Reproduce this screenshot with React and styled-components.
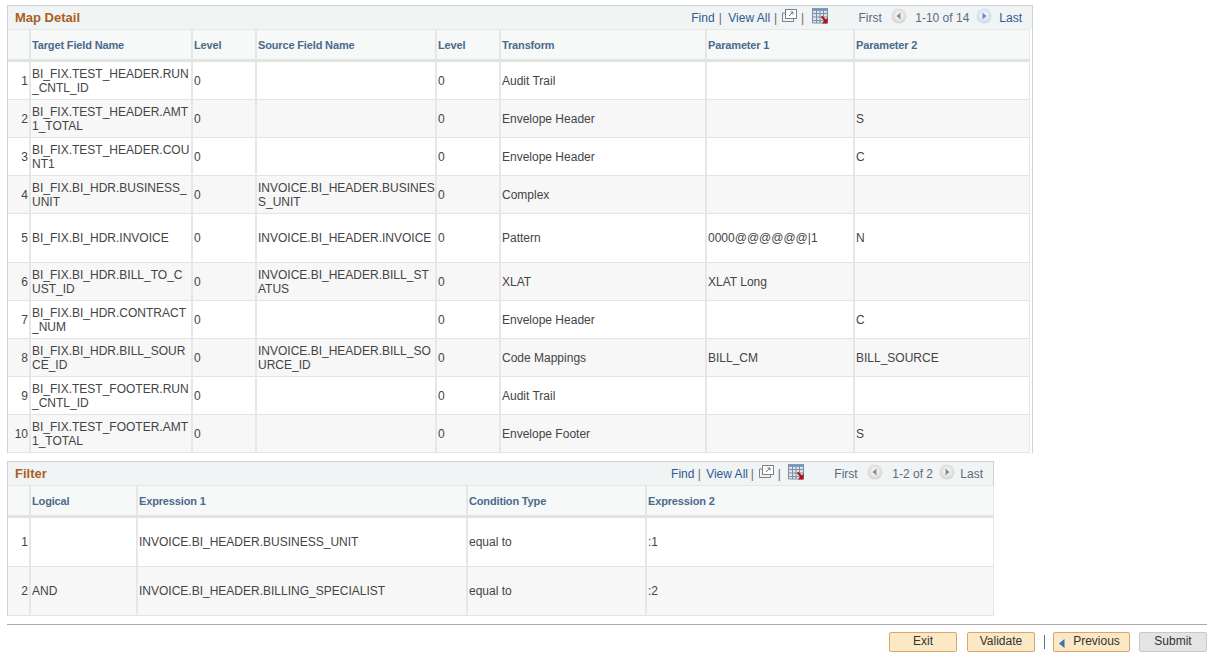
import styled, {createGlobalStyle} from 'styled-components'

const GlobalStyle = createGlobalStyle`
  html, body {
    margin: 0;
    padding: 0;
    background: #fff;
    font-family: "Liberation Sans", Arial, sans-serif;
    font-size: 12px;
    color: #3d3d3d;
  }
`;

const Page = styled.div`
  width: 1211px;
  height: 657px;
  overflow: hidden;
  box-sizing: border-box;
  padding: 5px 4px 0 7px;
`;

const Grid = styled.section`
  box-sizing: border-box;
  width: ${p => p.$width}px;
  margin-bottom: 8px;
  border: solid #cfd2d4;
  border-width: 1px 1px 0 1px;
`;

const TitleBar = styled.div`
  display: flex;
  align-items: center;
  justify-content: space-between;
  height: 23px;
  box-sizing: border-box;
  padding: 0 10px 0 7px;
  background: #f1f4f5;
`;

const Title = styled.h2`
  margin: 0;
  font-size: 13px;
  font-weight: bold;
  color: #a9601c;
`;

const Nav = styled.div`
  display: flex;
  align-items: center;
  padding-top: 1px;
  font-size: 12px;
  color: #5a6b7c;
`;

const NavLink = styled.a`
  color: #2d5a94;
  text-decoration: none;
  margin-left: ${p => p.$gap || 0}px;
`;

const NavText = styled.span`
  margin-left: ${p => p.$gap || 0}px;
`;

const Bar = styled.span`
  margin-left: ${p => p.$gap}px;
  color: #6b6b6b;
`;

const NavIcon = styled.svg`
  display: block;
  flex: none;
  margin-left: ${p => p.$gap}px;
  margin-top: ${p => p.$top}px;
`;

const Table = styled.table`
  border-collapse: separate;
  border-spacing: 0;
  table-layout: fixed;
  width: ${p => p.$width}px;
`;

const HeadCell = styled.th`
  height: 33px;
  box-sizing: border-box;
  padding: 0 0 0 1px;
  background: #f7f8f8;
  border-top: 1px solid #e6e8e8;
  border-right: 2px solid #e6e8e8;
  border-bottom: 3px solid #e2e3e3;
  text-align: left;
  font-size: 11px;
  font-weight: bold;
  letter-spacing: -0.15px;
  color: #4a6a8c;
  &:last-child { border-right: 1px solid #e6e8e8; }
`;

const Cell = styled.td`
  height: ${p => p.$height}px;
  box-sizing: border-box;
  padding: ${p => (p.$nudge ? 1 : 0)}px 0 0 1px;
  background: ${p => (p.$odd ? '#fff' : '#f7f7f7')};
  border-right: 2px solid #e6e8e8;
  border-bottom: 1px solid #e2e3e3;
  font-size: 12px;
  line-height: 14px;
  color: #444;
  word-break: break-all;
  vertical-align: middle;
  &:last-child { border-right: 1px solid #e6e8e8; }
`;

const NumCell = styled(Cell)`
  text-align: right;
  padding-left: 0;
  padding-right: 1px;
`;

const Footer = styled.footer`
  border-top: 1px solid #a9a9ad;
  display: flex;
  justify-content: flex-end;
  align-items: center;
  gap: 9px;
  padding-top: 7px;
  width: 1200px;
`;

const Btn = styled.button`
  width: ${p => p.$width}px;
  height: 20px;
  box-sizing: border-box;
  margin-left: ${p => p.$gap || 0}px;
  border: 1px solid ${p => (p.$muted ? '#c9c9c9' : '#d9a66e')};
  border-radius: 2px;
  background: ${p => (p.$muted ? '#e4e4e4' : '#fbe8c4')};
  color: #333;
  font: 12px "Liberation Sans", Arial, sans-serif;
  padding: 0 0 2px;
  display: flex;
  align-items: center;
  justify-content: center;
  gap: 8px;
`;

const ButtonSep = styled.span`
  width: 1px;
  height: 14px;
  background: #5f7183;
  margin-right: -1px;
`;

const ButtonArrow = styled.svg`
  display: block;
  margin: 4px 0 0 -4px;
`;

function PopIcon({gap}) {
  return (
    <NavIcon width="15" height="14" viewBox="0 0 15 14" $gap={gap} $top={-4}>
      <rect x="3.5" y="0.5" width="11" height="9" fill="#fff" stroke="#7c8287" />
      <path d="M3 4H0.5V12.5H11.5V10" fill="none" stroke="#7c8287" />
      <path d="M7 7L11 3M8.5 3H11V5.5" fill="none" stroke="#6d7378" />
    </NavIcon>
  )
}

function GridIcon({gap}) {
  return (
    <NavIcon width="17" height="16" viewBox="0 0 17 16" $gap={gap} $top={-4}>
      <rect x="0" y="0" width="16" height="15" fill="#dfe5ec" />
      <rect x="0" y="0" width="16" height="3" fill="#7b9dc4" />
      <path d="M0.5 0V15H15.5V0M0 5.5H16M0 9H16M0 12.5H16M4.5 1V15M8 1V15M11.5 1V15" fill="none" stroke="#7e8fa5" />
      <path d="M9.5 8.5L14 13" stroke="#b80f14" strokeWidth="2" />
      <path d="M15.5 9.5V15.5H10Z" fill="#b80f14" />
    </NavIcon>
  )
}

function RoundArrow({dir, active, gap}) {
  const id = `ball-${dir}-${active ? 'on' : 'off'}`
  return (
    <NavIcon width="16" height="16" viewBox="0 0 16 16" $gap={gap} $top={-4}>
      <defs>
        <radialGradient id={id} cx="50%" cy="45%" r="55%">
          <stop offset="0%" stopColor="#fff" />
          <stop offset="100%" stopColor={active ? '#c9d7ea' : '#d2d2d2'} />
        </radialGradient>
      </defs>
      <circle cx="8" cy="8" r="7.5" fill={`url(#${id})`} />
      {dir === 'left'
        ? <path d="M5.5 8L9.5 4.5V11.5Z" fill="#8b8b8b" />
        : <path d="M10.5 8L6.5 4.5V11.5Z" fill={active ? '#5f8fcb' : '#8b8b8b'} />}
    </NavIcon>
  )
}

const mapCols = [23, 162, 64, 180, 64, 206, 148, 175];
const mapHead = ['', 'Target Field Name', 'Level', 'Source Field Name', 'Level', 'Transform', 'Parameter 1', 'Parameter 2'];
const mapRows = [
  [38, 'BI_FIX.TEST_HEADER.RUN_CNTL_ID', '0', '', '0', 'Audit Trail', '', ''],
  [38, 'BI_FIX.TEST_HEADER.AMT1_TOTAL', '0', '', '0', 'Envelope Header', '', 'S'],
  [38, 'BI_FIX.TEST_HEADER.COUNT1', '0', '', '0', 'Envelope Header', '', 'C'],
  [38, 'BI_FIX.BI_HDR.BUSINESS_UNIT', '0', 'INVOICE.BI_HEADER.BUSINESS_UNIT', '0', 'Complex', '', ''],
  [49, 'BI_FIX.BI_HDR.INVOICE', '0', 'INVOICE.BI_HEADER.INVOICE', '0', 'Pattern', '0000@@@@@@|1', 'N'],
  [38, 'BI_FIX.BI_HDR.BILL_TO_CUST_ID', '0', 'INVOICE.BI_HEADER.BILL_STATUS', '0', 'XLAT', 'XLAT Long', ''],
  [38, 'BI_FIX.BI_HDR.CONTRACT_NUM', '0', '', '0', 'Envelope Header', '', 'C'],
  [38, 'BI_FIX.BI_HDR.BILL_SOURCE_ID', '0', 'INVOICE.BI_HEADER.BILL_SOURCE_ID', '0', 'Code Mappings', 'BILL_CM', 'BILL_SOURCE'],
  [38, 'BI_FIX.TEST_FOOTER.RUN_CNTL_ID', '0', '', '0', 'Audit Trail', '', ''],
  [38, 'BI_FIX.TEST_FOOTER.AMT1_TOTAL', '0', '', '0', 'Envelope Footer', '', 'S'],
];

const filterCols = [23, 107, 330, 179, 347];
const filterHead = ['', 'Logical', 'Expression 1', 'Condition Type', 'Expression 2'];
const filterRows = [
  [49, '', 'INVOICE.BI_HEADER.BUSINESS_UNIT', 'equal to', ':1'],
  [49, 'AND', 'INVOICE.BI_HEADER.BILLING_SPECIALIST', 'equal to', ':2'],
];

// short cells in the 38px rows sit a pixel lower than the wrapped ones
const needsNudge = (height, text) => height === 38 && text.length <= 22

function DataTable({cols, head, rows}) {
  const width = cols.reduce((a, b) => a + b, 0)
  return (
    <Table $width={width}>
      <colgroup>
        {cols.map((w, i) => <col key={i} width={w} />)}
      </colgroup>
      <thead>
        <tr>
          {head.map((h, i) => <HeadCell key={i}>{h}</HeadCell>)}
        </tr>
      </thead>
      <tbody>
        {rows.map(([height, ...cells], r) => (
          <tr key={r}>
            <NumCell $height={height} $odd={r % 2 === 0} $nudge={height === 38}>{r + 1}</NumCell>
            {cells.map((c, i) => (
              <Cell key={i} $height={height} $odd={r % 2 === 0} $nudge={needsNudge(height, c)}>{c}</Cell>
            ))}
          </tr>
        ))}
      </tbody>
    </Table>
  )
}

function GridNav({range, lastLink, active, gaps}) {
  const LastItem = lastLink ? NavLink : NavText
  return (
    <Nav>
      <NavLink>Find</NavLink>
      <Bar $gap={gaps[0]}>|</Bar>
      <NavLink $gap={gaps[1]}>View All</NavLink>
      <Bar $gap={gaps[2]}>|</Bar>
      <PopIcon gap={gaps[3]} />
      <Bar $gap={gaps[4]}>|</Bar>
      <GridIcon gap={gaps[5]} />
      <NavText $gap={gaps[6]}>First</NavText>
      <RoundArrow dir="left" gap={gaps[7]} />
      <NavText $gap={gaps[8]}>{range}</NavText>
      <RoundArrow dir="right" active={active} gap={gaps[9]} />
      <LastItem $gap={gaps[10]}>Last</LastItem>
    </Nav>
  )
}

export default function App() {
  return (
    <Page>
      <GlobalStyle />
      <Grid $width={1026}>
        <TitleBar>
          <Title>Map Detail</Title>
          <GridNav range="1-10 of 14" lastLink active gaps={[4.2, 6.4, 3.8, 5.4, 3.5, 8.4, 29, 9, 8.5, 7, 7]} />
        </TitleBar>
        <DataTable cols={mapCols} head={mapHead} rows={mapRows} />
      </Grid>
      <Grid $width={987}>
        <TitleBar>
          <Title>Filter</Title>
          <GridNav range="1-2 of 2" gaps={[3.2, 5.4, 2.8, 5.4, 3.5, 7.4, 29, 9.7, 9, 6.3, 5]} />
        </TitleBar>
        <DataTable cols={filterCols} head={filterHead} rows={filterRows} />
      </Grid>
      <Footer>
        <Btn $width={68}>Exit</Btn>
        <Btn $width={68} $gap={1}>Validate</Btn>
        <ButtonSep />
        <Btn $width={77}>
          <ButtonArrow width="6" height="9" viewBox="0 0 6 9"><path d="M0 4.5L5.5 0V9Z" fill="#3f6fb0" /></ButtonArrow>
          Previous
        </Btn>
        <Btn $width={68} $muted>Submit</Btn>
      </Footer>
    </Page>
  )
}
